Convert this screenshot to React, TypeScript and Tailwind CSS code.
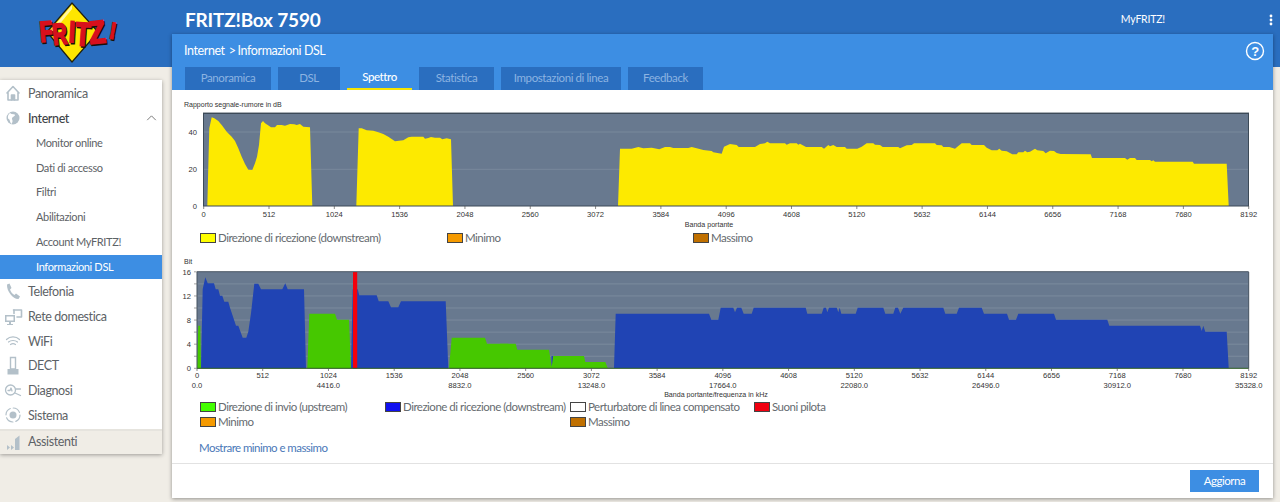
import type { ReactNode } from "react";

type Pt = [number, number];

// points were read off the picture at 3x, ox/oy is the corner of that crop
const trace = (ox: number, oy: number, pts: Pt[]) =>
  pts.map(([x, y]) => `${(ox + x / 3).toFixed(1)},${(oy + y / 3).toFixed(1)}`).join(" ");

const snrA: Pt[] = [[97,333],[103,100],[110,67],[118,70],[130,78],[140,90],[155,110],[170,125],[180,138],[190,160],[200,185],[210,207],[220,224],[232,225],[240,205],[246,185],[252,150],[258,85],[264,78],[270,85],[278,90],[288,97],[300,97],[306,90],[320,90],[330,92],[345,87],[358,88],[365,90],[375,87],[385,95],[405,97],[412,333]];
const snrB: Pt[] = [[544,333],[551,100],[560,100],[575,106],[595,107],[610,112],[625,117],[640,125],[660,139],[672,137],[685,136],[700,127],[710,125],[745,125],[750,131],[760,129],[768,126],[780,128],[795,128],[802,133],[815,130],[828,133],[834,333]];
const snrC: Pt[] = [[354,333],[360,161],[395,161],[415,156],[430,160],[455,158],[478,163],[495,156],[510,156],[520,159],[565,159],[575,156],[590,160],[610,165],[635,168],[640,172],[665,176],[672,155],[690,147],[710,150],[716,156],[765,156],[780,147],[795,145],[802,140],[810,145],[855,145],[860,149],[870,145],[890,145],[895,149],[900,146],[918,156],[965,156],[972,161],[985,150],[990,154],[1000,150],[1010,156],[1035,156],[1040,161],[1072,161],[1085,155],[1100,145],[1120,145],[1125,149]];
const snrD: Pt[] = [[0,150],[8,156],[55,156],[60,160],[80,151],[95,150],[102,145],[165,145],[170,150],[185,151],[190,156],[208,156],[225,161],[235,153],[245,145],[270,145],[275,150],[312,150],[320,158],[335,166],[352,166],[358,161],[365,167],[380,169],[397,178],[410,178],[415,172],[430,172],[435,167],[442,172],[450,170],[465,161],[472,166],[490,168],[497,175],[510,167],[522,168],[530,174],[542,177],[632,178],[636,189],[735,189],[742,194],[750,189],[765,189],[770,195],[810,195],[815,199],[820,196],[825,200],[938,200],[942,206],[1040,206],[1046,333]];

const bitBlueA: Pt[] = [[78,340],[83,103],[91,67],[98,85],[117,85],[122,103],[130,103],[135,122],[142,122],[148,140],[160,140],[165,158],[183,212],[190,212],[203,248],[214,248],[220,230],[228,175],[238,86],[250,86],[258,103],[322,103],[331,85],[338,103],[387,103],[393,340]];
const bitBlueB: Pt[] = [[528,340],[533,103],[548,103],[553,121],[605,121],[611,139],[640,139],[648,157],[670,157],[678,139],[812,139],[820,340]];
const bitBlueC: Pt[] = [[342,324],[347,161],[627,161],[634,179],[655,179],[662,143],[700,143],[705,157],[711,143],[724,143],[731,161],[755,161],[761,143],[917,143],[922,161],[965,161],[971,143],[978,143],[982,157],[987,143],[1010,143],[1015,157],[1019,143],[1024,161],[1067,161],[1073,143],[1140,143]];
const bitBlueD: Pt[] = [[0,143],[10,143],[16,161],[40,161],[46,143],[54,143],[61,161],[70,143],[190,143],[196,161],[230,161],[237,143],[305,143],[312,161],[381,161],[387,179],[408,179],[415,161],[522,161],[528,179],[682,179],[688,197],[960,197],[965,213],[970,197],[976,215],[1040,215],[1046,324]];
const bitGreenA: Pt[] = [[66,340],[70,212],[76,212],[78,340]];
const bitGreenB: Pt[] = [[397,340],[403,176],[480,176],[486,194],[522,194],[528,340]];
const bitGreenC: Pt[] = [[822,340],[830,248],[930,248],[936,266],[1000,266],[1000,340]];
const bitGreenD: Pt[] = [[0,324],[0,251],[47,251],[52,269],[147,269],[155,320],[160,288],[252,288],[256,306],[316,306],[323,324]];

const carriers = [0, 512, 1024, 1536, 2048, 2560, 3072, 3584, 4096, 4608, 5120, 5632, 6144, 6656, 7168, 7680, 8192];
const freqs: Record<number, string> = { 0: "0.0", 1024: "4416.0", 2048: "8832.0", 3072: "13248.0", 4096: "17664.0", 5120: "22080.0", 6144: "26496.0", 7168: "30912.0", 8192: "35328.0" };
const axisFont = { fontFamily: "'Liberation Sans', Arial, sans-serif", fontSize: 7.6 };

function SnrChart() {
  const x = (c: number) => 203.7 + (c / 8192) * 1045;
  return (
    <svg viewBox="172 96 1101 134" className="block h-[134px] w-[1101px]" style={axisFont} fill="#333">
      <text x="184" y="106.5" fontSize="7">Rapporto segnale-rumore in dB</text>
      <rect x="203.5" y="113.5" width="1045" height="92.5" fill="#68798f" />
      <line x1="204" x2="1248" y1="132" y2="132" stroke="#8493a5" strokeWidth="0.6" />
      <line x1="204" x2="1248" y1="169.3" y2="169.3" stroke="#8493a5" strokeWidth="0.6" />
      <g fill="#fdea00">
        <polygon points={trace(175, 95, snrA)} />
        <polygon points={trace(175, 95, snrB)} />
        <polygon points={trace(500, 95, [...snrC, ...snrD.map(([a, b]): Pt => [a + 1140, b])])} />
      </g>
      <rect x="203.5" y="113.5" width="1045" height="92.5" fill="none" stroke="#3c4a58" />
      <line x1="203" x2="1249" y1="112.5" y2="112.5" stroke="#aab0b6" />
      <text x="197" y="134.5" textAnchor="end">40</text>
      <text x="197" y="172" textAnchor="end">20</text>
      <text x="197" y="208.5" textAnchor="end">0</text>
      {carriers.map((c) => (
        <g key={c}>
          <line x1={x(c)} x2={x(c)} y1="206" y2="209" stroke="#555" strokeWidth="0.7" />
          <text x={x(c)} y="216.5" textAnchor="middle">{c}</text>
        </g>
      ))}
      <text x="709" y="226.5" textAnchor="middle" fontSize="7.1">Banda portante</text>
    </svg>
  );
}

function BitChart() {
  const x = (c: number) => 197 + (c / 8192) * 1051.7;
  const y = (b: number) => 368.3 - b * 6.03;
  return (
    <svg viewBox="172 256 1101 142" className="block h-[142px] w-[1101px]" style={axisFont} fill="#333">
      <text x="184" y="264" fontSize="7">Bit</text>
      <rect x="197" y="272" width="1051.7" height="96.3" fill="#68798f" />
      {[2, 4, 6, 8, 10, 12, 14].map((b) => (
        <line key={b} x1="197" x2="1248" y1={y(b)} y2={y(b)} stroke="#808fa1" strokeWidth="0.8" />
      ))}
      <g fill="#2044b4">
        <polygon points={trace(175, 255, bitBlueA)} />
        <polygon points={trace(175, 255, bitBlueB)} />
        <polygon points={trace(500, 260, [...bitBlueC, ...bitBlueD.map(([a, b]): Pt => [a + 1140, b])])} />
        <rect x="551.5" y="356" width="1.6" height="12" />
      </g>
      <g fill="#46c800">
        <polygon points={trace(175, 255, bitGreenA)} />
        <polygon points={trace(175, 255, bitGreenB)} />
        <polygon points={trace(175, 255, bitGreenC)} />
        <polygon points={trace(500, 260, bitGreenD)} />
      </g>
      <rect x="353" y="272" width="4.2" height="96.3" fill="#f4000b" />
      <line x1="197" x2="1248.7" y1="368.3" y2="368.3" stroke="#2a5a20" />
      <line x1="197" x2="1248.7" y1="271.7" y2="271.7" stroke="#445261" />
      <line x1="197" x2="197" y1="272" y2="368" stroke="#445261" />
      <line x1="1248.7" x2="1248.7" y1="272" y2="368" stroke="#445261" />
      {[0, 4, 8, 12, 16].map((b) => (
        <text key={b} x="191" y={y(b) + 3} textAnchor="end">{b}</text>
      ))}
      {[0, 2, 4, 6, 8, 10, 12, 14, 16].map((b) => (
        <line key={b} x1="194" x2="197" y1={y(b)} y2={y(b)} stroke="#666" strokeWidth="0.6" />
      ))}
      {carriers.map((c) => (
        <g key={c}>
          <line x1={x(c)} x2={x(c)} y1="368" y2="371" stroke="#555" strokeWidth="0.7" />
          <text x={x(c)} y="378" textAnchor="middle">{c}</text>
          {freqs[c] && <text x={x(c)} y="387.5" textAnchor="middle">{freqs[c]}</text>}
        </g>
      ))}
      <text x="716" y="396.5" textAnchor="middle" fontSize="7.1">Banda portante/frequenza in kHz</text>
    </svg>
  );
}

function Logo() {
  // letter, x, baseline, rotation, font size, width
  const letters: [string, number, number, number, number, number][] = [
    ["F", 40.5, 42, -5, 29, 13],
    ["R", 53.5, 45, -6, 30, 14.5],
    ["I", 68.5, 42, 3, 30, 6],
    ["T", 74.5, 45, 4, 33, 15],
    ["Z", 90, 44, -6, 32, 16.5],
    ["!", 108.5, 38, 10, 23, 6],
  ];
  const word = (fill: string, dx: number, dy: number) => (
    <g fill={fill} stroke={fill} strokeWidth="1.7" aria-hidden={fill !== "#d8101c"}>
      {letters.map(([l, lx, ly, r, size, w]) => (
        <text
          key={l}
          x={lx + dx}
          y={ly + dy}
          transform={`rotate(${r} ${lx + dx} ${ly + dy})`}
          fontSize={size}
          fontWeight="700"
          fontFamily="'Liberation Sans', Arial, sans-serif"
          textLength={w}
          lengthAdjust="spacingAndGlyphs"
        >
          {l}
        </text>
      ))}
    </g>
  );
  return (
    <svg viewBox="0 0 172 67" className="block h-[67px] w-[172px]">
      <polygon points="72,3 98,32 72,62 47,32" fill="#ffe600" stroke="#1f1f10" strokeWidth="1.2" strokeLinejoin="round" />
      <polygon points="72,5 50,31 54,31 72,9" fill="#fff8a0" />
      {word("#1a1008", 1.2, 1.4)}
      {word("#d8101c", 0, 0)}
    </svg>
  );
}

const iconStroke = { fill: "none", stroke: "#b3c0c9", strokeWidth: 1.6, strokeLinecap: "round" as const, strokeLinejoin: "round" as const };

const icons: Record<string, ReactNode> = {
  home: (
    <g {...iconStroke}>
      <path d="M7 11 13 4.500 19 11M8 10.500V18H18V10.500" />
      <path d="M11.500 18V13H14.500V18" fill="#b3c0c9" />
    </g>
  ),
  globe: (
    <g>
      <circle cx="13" cy="11" r="6.500" fill="#b3c0c9" />
      <path d="M10 6C12 8 14 6.500 15 8 14.500 10 12 9.500 12 12 13 14 12.500 15.500 11.500 17 9.500 15 10.500 12.500 8 11.500 7.500 9 8.500 7 10 6Z" fill="#fff" />
    </g>
  ),
  phone: <path d="M7 4.500 9.500 3.500 11.500 8 10 9.500C10.500 11.500 12.500 14 14.500 15L16 13.500 20 16.500 18.500 19C13.500 19.500 6.500 11.500 7 4.500Z" fill="#b3c0c9" />,
  network: (
    <g>
      <path d="M5 10H15V17H5ZM9 17H11V19H13V20H7V19H9Z" fill="#b3c0c9" />
      <path d="M6.500 11.500H13.500V15.500H6.500Z" fill="#fff" />
      <path d="M13.500 5H21.500V12H17" {...iconStroke} />
      <path d="M14 5V8.500" {...iconStroke} />
    </g>
  ),
  wifi: (
    <g {...iconStroke} strokeWidth="1.2">
      <path d="M6.500 9.500C10 6 16 6 19.500 9.500" />
      <path d="M8.500 12C11 10 15 10 17.500 12" />
      <path d="M10.500 14.500C12 13.500 14 13.500 15.500 14.500" />
    </g>
  ),
  dect: (
    <g>
      <path d="M10.500 2.500H15.500V14H10.500Z" fill="none" stroke="#b3c0c9" strokeWidth="1.400" />
      <path d="M7.500 14H18.500V19.500H7.500Z" fill="#b3c0c9" />
    </g>
  ),
  diag: (
    <g {...iconStroke} strokeWidth="1.300">
      <circle cx="10.500" cy="10" r="5" />
      <path d="M8 10.500H10L11 8 12 11" />
      <path d="M15 13 20.500 15.500M16 9H20.500" />
    </g>
  ),
  system: (
    <g>
      <circle cx="13" cy="11" r="3.500" fill="#b3c0c9" />
      <circle cx="13" cy="11" r="7" {...iconStroke} strokeWidth="1.200" strokeDasharray="8 3" />
    </g>
  ),
  wizard: (
    <g fill="#b3c0c9">
      <path d="M15 7 19.500 3.500V18H15Z" />
      <path d="M7 13 10 15.500 7 18ZM11 13 14 15.500 11 18Z" />
    </g>
  ),
};

function NavIcon({ name }: { name: string }) {
  return (
    <svg viewBox="0 0 26 22" className="h-[22px] w-[26px] shrink-0">
      {icons[name]}
    </svg>
  );
}

function NavRow({ icon, label, strong, children }: { icon: string; label: string; strong?: boolean; children?: ReactNode }) {
  return (
    <div className={`flex h-[24.8px] items-center text-[12.5px] tracking-[-0.4px] ${strong ? "font-medium text-[#3f4448]" : "text-[#5d6266]"}`}>
      <NavIcon name={icon} />
      <span className="ml-[2px] pt-[2px]">{label}</span>
      {children}
    </div>
  );
}

function Swatch({ color, label, className }: { color: string; label: string; className?: string }) {
  return (
    <div className={`flex h-[15px] items-center whitespace-nowrap text-[11.5px] tracking-[-0.5px] text-[#666b70] ${className ?? ""}`}>
      <span className={`mr-[2px] h-[10px] w-[16px] shrink-0 border border-[#444] ${color}`} />
      <span>{label}</span>
    </div>
  );
}

export default function App() {
  const subItems = ["Monitor online", "Dati di accesso", "Filtri", "Abilitazioni", "Account MyFRITZ!"];
  const tabs = [
    { label: "Panoramica", w: "w-[86px]" },
    { label: "DSL", w: "w-[62px]" },
    { label: "Spettro", w: "w-[65px]", active: true },
    { label: "Statistica", w: "w-[75px]" },
    { label: "Impostazioni di linea", w: "w-[120px]" },
    { label: "Feedback", w: "w-[75px]" },
  ];

  return (
    <div
      className="flex h-[502px] w-[1280px] overflow-hidden bg-[#f0ede6] bg-[linear-gradient(#2a6ebf_67px,transparent_67px)]"
      style={{ fontFamily: "'Lato', 'Noto Sans', sans-serif" }}
    >
      <div className="w-[172px] shrink-0">
        <Logo />
        <aside className="mt-[13px] w-[162px] bg-white pt-[1px] shadow-[0_1px_4px_rgba(0,0,0,0.35)]">
          <NavRow icon="home" label="Panoramica" />
          <NavRow icon="globe" label="Internet" strong>
            <svg viewBox="0 0 12 7" className="ml-auto mr-[5px] h-[6px] w-[11px]" fill="none" stroke="#666" strokeWidth="1">
              <path d="M1 6 6 1 11 6" />
            </svg>
          </NavRow>
          {subItems.map((s) => (
            <div key={s} className="flex h-[24.8px] items-center pl-[36px] text-[11px] tracking-[-0.35px] text-[#5d6266]">
              {s}
            </div>
          ))}
          <div className="flex h-[24.5px] items-center bg-[#3d8ee3] pl-[36px] text-[11px] tracking-[-0.35px] text-white">Informazioni DSL</div>
          <NavRow icon="phone" label="Telefonia" />
          <NavRow icon="network" label="Rete domestica" />
          <NavRow icon="wifi" label="WiFi" />
          <NavRow icon="dect" label="DECT" />
          <NavRow icon="diag" label="Diagnosi" />
          <NavRow icon="system" label="Sistema" />
          <div className="mt-[1px] flex h-[25.500px] items-center border-t-2 border-[#e6e4de] bg-[#f0ede6] text-[12.5px] tracking-[-0.4px] text-[#5d6266]">
            <NavIcon name="wizard" />
            <span className="ml-[2px]">Assistenti</span>
          </div>
        </aside>
      </div>

      <div className="w-[1101px] shrink-0">
        <div className="flex h-[34px] items-center pt-[5px] text-white">
          <h1 className="ml-[13px] text-[19px] font-bold leading-none tracking-[-0.2px]">FRITZ!Box 7590</h1>
          <span className="ml-auto mr-[104px] text-[10.5px] tracking-[-0.2px]">MyFRITZ!</span>
          <svg viewBox="0 0 4 12" className="h-[12px] w-[4px]" fill="#fff">
            <circle cx="2" cy="2" r="1.400" />
            <circle cx="2" cy="6" r="1.400" />
            <circle cx="2" cy="10" r="1.400" />
          </svg>
        </div>
        <main className="flex h-[464px] flex-col bg-white shadow-[0_1px_4px_rgba(0,0,0,0.4)]">
          <div className="h-[56px] bg-[#3d8ee3]">
            <div className="flex h-[33px] items-center justify-between pl-[12px] pr-[8px] text-[12.5px] tracking-[-0.4px] text-white">
              <span className="pt-[2px]">
                Internet<span className="ml-[4px] mr-[2px]">&gt;</span>Informazioni DSL
              </span>
              <svg viewBox="0 0 20 20" className="h-[20px] w-[20px]">
                <circle cx="10" cy="10" r="8.500" fill="none" stroke="#fff" strokeWidth="1.400" />
                <text x="10" y="14.500" textAnchor="middle" fontSize="13" fontWeight="700" fill="#fff" fontFamily="'Liberation Sans', sans-serif">?</text>
              </svg>
            </div>
            <nav className="ml-[13px] flex h-[23px] gap-[7px]">
              {tabs.map((t) => (
                <div
                  key={t.label}
                  className={`flex items-center justify-center pb-[2px] text-[11.5px] tracking-[-0.4px] ${t.w} ${
                    t.active ? "border-b-2 border-[#f7e400] font-medium text-white" : "bg-[#2a6ebf] text-[#8cb4e2]"
                  }`}
                >
                  {t.label}
                </div>
              ))}
            </nav>
          </div>

          <div className="flex-1">
            <div className="pt-[6px]">
              <SnrChart />
            </div>
            <div className="flex h-[16px] items-center pl-[28px]">
              <Swatch color="bg-[#ffff00]" label="Direzione di ricezione (downstream)" className="w-[247px]" />
              <Swatch color="bg-[#f59a00]" label="Minimo" className="w-[246px]" />
              <Swatch color="bg-[#c07000]" label="Massimo" />
            </div>
            <div className="pt-[10px]">
              <BitChart />
            </div>
            <div className="grid grid-cols-[185px_185px_184px_auto] pl-[28px] pt-[1px]">
              <Swatch color="bg-[#44ff00]" label="Direzione di invio (upstream)" />
              <Swatch color="bg-[#1010f0]" label="Direzione di ricezione (downstream)" />
              <Swatch color="bg-white" label="Perturbatore di linea compensato" />
              <Swatch color="bg-[#f00010]" label="Suoni pilota" />
              <Swatch color="bg-[#f59a00]" label="Minimo" className="col-span-2" />
              <Swatch color="bg-[#c07000]" label="Massimo" />
            </div>
            <div className="pl-[27px] pt-[10px] text-[11.5px] tracking-[-0.55px] text-[#4a78b8]">Mostrare minimo e massimo</div>
          </div>

          <div className="flex h-[35px] items-center justify-end border-t border-[#e2e2e2] pr-[14px]">
            <div className="flex h-[22px] w-[69px] items-center justify-center bg-[#3d8ee3] text-[11.5px] tracking-[-0.5px] text-white">Aggiorna</div>
          </div>
        </main>
      </div>
    </div>
  );
}
